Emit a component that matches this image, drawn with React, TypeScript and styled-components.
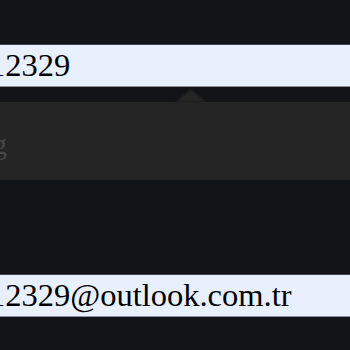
import React from "react";
import styled, { createGlobalStyle } from "styled-components";

const Global = createGlobalStyle`
  html, body { margin: 0; padding: 0; background: #131417; }
  body { width: 350px; height: 350px; overflow: hidden; font-family: "Liberation Serif", "Times New Roman", serif; }
`;

const Page = styled.div`
  width: 350px;
  height: 350px;
  overflow: hidden;
  padding-top: 44px;
  box-sizing: border-box;
  display: flex;
  flex-direction: column;
`;

const Field = styled.input`
  display: block;
  box-sizing: border-box;
  width: 380px;
  height: 43px;
  margin: 0 0 0 -12px;
  padding: 0 0 0 1px;
  border: none;
  border-top: 1px solid #3d4350;
  border-bottom: 1px solid #8a8f99;
  background: #e8f0fe;
  color: #000;
  font-family: "Liberation Serif", "Times New Roman", serif;
  font-size: 32.5px;
  outline: none;
`;

const TipWrap = styled.div`
  position: relative;
  margin-top: 15px;
  height: 78px;
  background: #252525;
  display: flex;
  align-items: center;
`;

const Arrow = styled.div`
  position: absolute;
  top: -13px;
  left: 176px;
  width: 0;
  height: 0;
  border-left: 15px solid transparent;
  border-right: 15px solid transparent;
  border-bottom: 13px solid #252525;
  filter: blur(0.8px);
`;

const TipText = styled.span`
  margin-left: -8px;
  margin-top: 6px;
  color: #474747;
  font-family: "Liberation Serif", "Times New Roman", serif;
  font-size: 30px;
`;

const Spacer = styled.div`
  height: 94px;
`;

export default function App() {
  return (
    <>
      <Global />
      <Page>
        <Field readOnly value="12329" />
        <TipWrap>
          <Arrow />
          <TipText>g</TipText>
        </TipWrap>
        <Spacer />
        <Field readOnly value="12329@outlook.com.tr" />
      </Page>
    </>
  );
}
